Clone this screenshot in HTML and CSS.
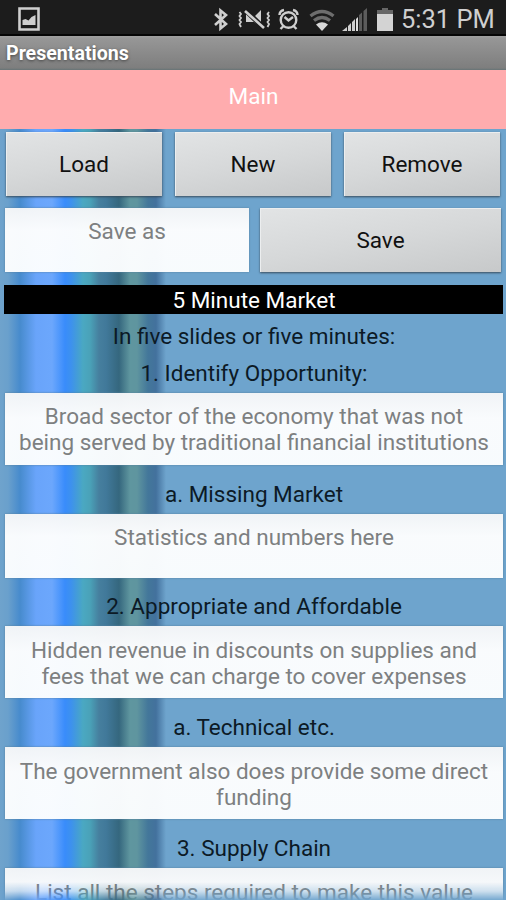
FILE: index.html
```html
<!DOCTYPE html>
<html lang="en">
<head>
<meta charset="utf-8">
<title>Presentations</title>
<link rel="stylesheet" href="styles.css">
</head>
<body>
<div class="screen">
  <header class="status">
    <svg class="shot" width="22" height="24" viewBox="0 0 22 24"><path d="M1.500 1.500h19v21h-19z" fill="none" stroke="#cfcfcf" stroke-width="2.600"/><path d="M4.500 18v-5l3-1 3 1.500 3-3.500 4-2v10z" fill="#cfcfcf"/></svg>
    <svg class="tray" width="182" height="28" viewBox="214 4 182 28">
      <path d="M216 13l11 10-5.500 4.500V9.500l5.500 4.500-11 10" fill="none" stroke="#cfcfcf" stroke-width="2.600"/>
      <path d="M247 13h4l4 3 7-7v17l-7-5h-8z" fill="#cfcfcf"/>
      <path d="M246 9l20 19" stroke="#1c1c1c" stroke-width="5"/>
      <path d="M246 10l19 17" stroke="#cfcfcf" stroke-width="2.600"/>
      <path d="M240.500 11l1.500 2-1.500 2 1.500 2-1.500 2 1.500 2-1.500 2 1.500 3M270 11l-1.500 2 1.500 2-1.500 2 1.500 2-1.500 2 1.500 2-1.500 3" fill="none" stroke="#cfcfcf" stroke-width="1.800"/>
      <circle cx="289.500" cy="19" r="7.800" fill="none" stroke="#cfcfcf" stroke-width="2.400"/>
      <path d="M285.500 16l4 3.500 4.500-3.500M284.500 25l-3 3M294.500 25l3 3M280.500 14q0-4 4.500-5M298.500 14q0-4-4.500-5" fill="none" stroke="#cfcfcf" stroke-width="2.400"/>
      <g fill="none" stroke="#6d6d6d" stroke-width="3.400"><path d="M311.500 15q11.500-9 23 0M315 19.500q8-6 16 0"/></g>
      <path d="M317 23.500q6-4.500 12 0l-6 6.500z" fill="#d8d8d8"/>
      <path d="M343 30l5-4v4z" fill="#cfcfcf"/><path d="M349 25l3-3v8h-3zM353 21l3-3v12h-3z" fill="#cfcfcf"/><path d="M357 18l2-2v14h-2z" fill="#e0e0e0"/><path d="M360 14l3-2.500V30h-3zM364.500 10l3.500-3v23h-3.500z" fill="#5c5c5c"/>
      <path d="M378 9h5V7h6v2h5v21h-16z" fill="#666"/><path d="M378 13h16v17h-16z" fill="#d3d3d3"/>
    </svg>
    <span class="clock">5:31 PM</span>
  </header>
  <div class="titlebar">Presentations</div>
  <main class="content">
    <div class="banner">Main</div>
    <div class="row three"><button class="btn">Load</button><button class="btn">New</button><button class="btn">Remove</button></div>
    <div class="row save"><div class="field">Save as</div><button class="btn">Save</button></div>
    <h1 class="heading">5 Minute Market</h1>
    <div class="label intro">In five slides or five minutes:</div>
    <div class="label first">1. Identify Opportunity:</div>
    <div class="field wide tall">Broad sector of the economy that was not<br>being served by traditional financial institutions</div>
    <div class="label">a. Missing Market</div>
    <div class="field wide">Statistics and numbers here</div>
    <div class="label">2. Appropriate and Affordable</div>
    <div class="field wide tall">Hidden revenue in discounts on supplies and<br>fees that we can charge to cover expenses</div>
    <div class="label">a. Technical etc.</div>
    <div class="field wide tall">The government also does provide some direct<br>funding</div>
    <div class="label">3. Supply Chain</div>
    <div class="field wide tall">List all the steps required to make this value</div>
    <div class="fade"></div>
  </main>
</div>
</body>
</html>
```
FILE: styles.css
```css
* { box-sizing: border-box; }
body { margin: 0; font-family: Roboto, sans-serif; font-size: 22.5px; line-height: 26px; color: #0c1a26; }
.screen { width: 506px; height: 900px; overflow: hidden; display: flex; flex-direction: column; }
.status { height: 36px; flex: none; background: #1c1c1c; border-bottom: 2px solid #050505; display: flex; align-items: center; padding: 3px 11px 0 18px; color: #cfcfcf; }
.tray { margin-left: 173px; flex: none; }
.shot { flex: none; }
.clock { margin-left: 6px; font-size: 25.5px; white-space: nowrap; }
.titlebar { height: 34px; flex: none; background: linear-gradient(#a0a0a0, #969696 8%, #7e7e7e 94%, #667476); color: #fff; font-size: 19.6px; font-weight: 700; line-height: 35px; padding-left: 6px; text-shadow: 0 1px 3px #444; }
.content { flex: 1; position: relative; overflow: hidden; text-align: center; background: linear-gradient(90deg, #6fa3cc 0, #6aa0cc 8px, #478bcd 20px, #69a4fa 36px, #6ca7fc 52px, #398cfb 65px, #3d91ee 71px, #4aa8c2 83px, #4aa2b8 90px, #467f9e 99px, #41799a 106px, #35677e 119px, #5f969f 130px, #5f959f 137px, #43779a 148px, #43719d 156px, #6ea4cd 166px); }
.banner { height: 59px; background: #ffacae; color: #fff; line-height: 53px; padding-left: 1px; }
.row { display: grid; }
.three { grid-template-columns: repeat(3, 156px); gap: 13px; padding: 3px 0 0 6px; height: 67px; }
.save { grid-template-columns: 244px 241px; gap: 11px; margin-top: 12px; padding-left: 5px; height: 64px; }
.btn { border: 0; padding: 0 0 1px; font: inherit; color: #111; background: linear-gradient(170deg, #e2e4e5, #d6d8d9 50%, #c7c9ca); box-shadow: inset 1px 1px 0 #eceeef, 0 1px 2px #384b5b; }
.field { height: 64px; padding-top: 10px; color: #7d8081; background: linear-gradient(rgba(243,245,247,.98), rgba(252,253,254,.98) 35%, rgba(252,254,255,.97)); box-shadow: 0 0 2px #55819f; white-space: nowrap; }
.wide { margin: 0 3px 0 5px; }
.tall { height: 72px; padding-top: 11px; }
.first + .tall { padding-top: 10.5px; }
.heading { margin: 13px 3px 0 4px; height: 29px; background: #000; color: #fff; font-size: 22.5px; font-weight: 400; line-height: 30px; padding-left: 1px; }
.label { height: 49px; line-height: 58px; padding-left: 2px; }
.wide:not(.tall) + .label { height: 48.5px; line-height: 57px; }
.intro { height: 37px; line-height: 45px; }
.first { height: 42px; line-height: 45px; margin-bottom: -0.5px; }
.fade { position: absolute; left: 0; right: 0; bottom: 0; height: 18px; background: linear-gradient(90deg, #6fa3cc 0, #478bcd 20px, #69a4fa 36px, #398cfb 66px, #4aa8c2 85px, #41799a 106px, #35677e 119px, #5f969f 133px, #43719d 156px, #6ea4cd 166px); -webkit-mask-image: linear-gradient(transparent, rgba(0,0,0,.3) 50%, rgba(0,0,0,.95)); mask-image: linear-gradient(transparent, rgba(0,0,0,.3) 50%, rgba(0,0,0,.95)); }
```
